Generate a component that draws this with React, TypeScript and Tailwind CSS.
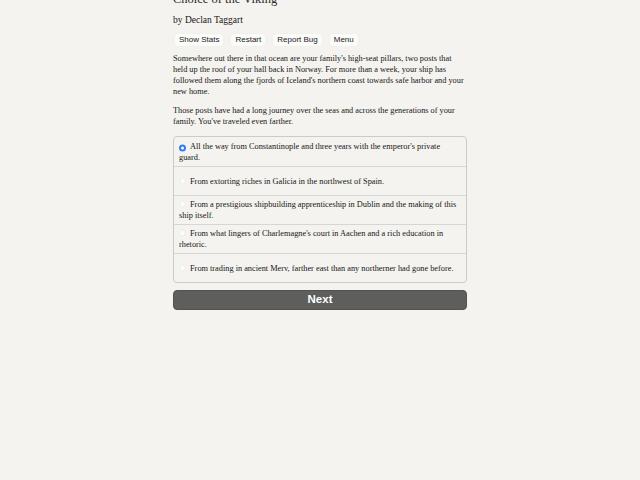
import { useState } from 'react';

const OPTIONS = [
  "All the way from Constantinople and three years with the emperor's private guard.",
  'From extorting riches in Galicia in the northwest of Spain.',
  'From a prestigious shipbuilding apprenticeship in Dublin and the making of this ship itself.',
  "From what lingers of Charlemagne's court in Aachen and a rich education in rhetoric.",
  'From trading in ancient Merv, farther east than any northerner had gone before.',
];

const TOOLBAR = ['Show Stats', 'Restart', 'Report Bug', 'Menu'];

function Radio({ checked }: { checked: boolean }) {
  if (checked) {
    return (
      <span className="mr-[4px] inline-flex h-[7px] w-[7px] translate-y-[0.5px] items-center justify-center rounded-full bg-[#2f7cf6]">
        <span className="h-[3px] w-[3px] rounded-full bg-white" />
      </span>
    );
  }
  return (
    <span className="mr-[4px] inline-block h-[7px] w-[7px] translate-y-[0.5px] rounded-full border border-[#ececea] bg-[#fbfbfa]" />
  );
}

export default function App() {
  const [choice, setChoice] = useState(0);

  return (
    <div className="min-h-screen overflow-hidden bg-[#f4f3ef] font-['Liberation_Serif',serif] text-[#161616]">
      <div className="mx-auto w-[294px]">
        <h1 className="-mt-[8px] text-[12.5px] leading-[15px] text-[#2b2b2b]">Choice of the Viking</h1>
        <p className="mt-[7px] text-[9.5px] leading-[12px]">by Declan Taggart</p>

        {/* stats / restart / bug / menu */}
        <div className="mt-[8px] flex gap-[8px] pl-[2px]">
          {TOOLBAR.map((label) => (
            <button
              key={label}
              className="h-[12px] rounded-[2px] bg-[#fbfbf9] px-[4px] font-['Liberation_Sans',sans-serif] text-[8px] leading-[12px] text-[#222] shadow-[0_0_1px_rgba(0,0,0,0.12)]"
            >
              {label}
            </button>
          ))}
        </div>

        <div className="text-[8.3px] leading-[11px]">
          <p className="mt-[7px]">
            Somewhere out there in that ocean are your family's high-seat pillars, two posts that
            held up the roof of your hall back in Norway. For more than a week, your ship has
            followed them along the fjords of Iceland's northern coast towards safe harbor and your
            new home.
          </p>
          <p className="mt-[8px]">
            Those posts have had a long journey over the seas and across the generations of your
            family. You've traveled even farther.
          </p>
        </div>

        {/* choice list */}
        <div className="mt-[9px] overflow-hidden rounded-[4px] border border-[#cbcbc8] bg-[#f4f3ef]">
          {OPTIONS.map((text, i) => (
            <label
              key={i}
              onClick={() => setChoice(i)}
              className={`flex h-[29px] cursor-pointer items-center px-[5px] text-[8.3px] leading-[11px] ${
                i > 0 ? 'border-t border-[#d6d6d3]' : ''
              }`}
            >
              <span>
                <Radio checked={choice === i} />
                {text}
              </span>
            </label>
          ))}
        </div>

        <button className="mt-[7px] h-[20px] w-full rounded-[4px] border border-[#525250] bg-[#5e5e5c] font-['Liberation_Sans',sans-serif] text-[11.5px] font-bold text-white">
          Next
        </button>
      </div>
    </div>
  );
}
